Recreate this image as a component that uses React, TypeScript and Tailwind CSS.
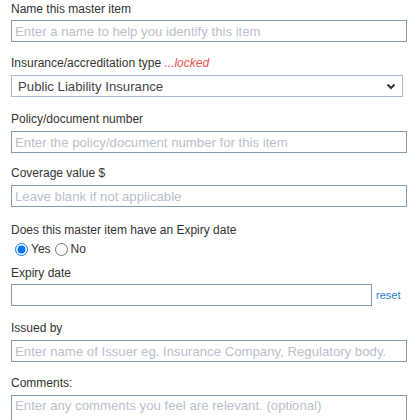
import React from "react";

const labelCls = "block text-[12px] leading-[14px] text-[#333]";
const inputCls =
  "block w-[396px] h-[22px] border border-[#7f9bb5] px-[3px] text-[13.2px] text-[#333] placeholder:text-[#b9c1cb] outline-none bg-white";

export default function App() {
  return (
    <div
      className="w-[420px] h-[420px] overflow-hidden bg-white pl-[11px] pt-[2px]"
      style={{ fontFamily: '"Liberation Sans", Arial, sans-serif' }}
    >
      <label className={labelCls}>Name this master item</label>
      <input className={`${inputCls} mt-[4px]`} placeholder="Enter a name to help you identify this item" />

      <label className={`${labelCls} mt-[14px]`}>
        Insurance/accreditation type <span className="italic text-[#f0524f]">...locked</span>
      </label>
      <div className="relative mt-[5px] w-[392px] h-[22px] border border-[#a9b9c7] bg-white">
        <span className="absolute left-[6px] top-[3px] text-[13.2px] leading-[15px] text-[#444]">
          Public Liability Insurance
        </span>
        <svg className="absolute right-[6px] top-[7px]" width="10" height="7" viewBox="0 0 10 7">
          <path d="M1.5 1.5 L5 5 L8.5 1.5" fill="none" stroke="#333" strokeWidth="2" />
        </svg>
      </div>

      <label className={`${labelCls} mt-[15px]`}>Policy/document number</label>
      <input className={`${inputCls} mt-[5px]`} placeholder="Enter the policy/document number for this item" />

      <label className={`${labelCls} mt-[13px]`}>Coverage value $</label>
      <input className={`${inputCls} mt-[5px]`} placeholder="Leave blank if not applicable" />

      <label className={`${labelCls} mt-[16px]`}>Does this master item have an Expiry date</label>
      <div className="flex items-center mt-[5px] ml-[4px] text-[12px] leading-[14px] text-[#333]">
        <input type="radio" name="exp" defaultChecked className="m-0 w-[13px] h-[13px]" />
        <span className="ml-[3px]">Yes</span>
        <input type="radio" name="exp" className="m-0 ml-[4px] w-[13px] h-[13px]" />
        <span className="ml-[3px]">No</span>
      </div>

      <label className={`${labelCls} mt-[10px]`}>Expiry date</label>
      <div className="flex items-center mt-[4px]">
        <input className="block w-[361px] h-[22px] border border-[#7f9bb5] outline-none bg-white" />
        <a className="ml-[4px] text-[11px] text-[#2a7ec4]">reset</a>
      </div>

      <label className={`${labelCls} mt-[15px]`}>Issued by</label>
      <input
        className={`${inputCls} mt-[5px]`}
        placeholder="Enter name of Issuer eg. Insurance Company, Regulatory body."
      />

      <label className={`${labelCls} mt-[14px]`}>Comments:</label>
      <textarea
        className="block mt-[5px] w-[396px] h-[50px] border border-[#7f9bb5] px-[3px] py-[2px] text-[13.2px] leading-[15px] placeholder:text-[#b9c1cb] outline-none resize-none"
        placeholder="Enter any comments you feel are relevant. (optional)"
      />
    </div>
  );
}
